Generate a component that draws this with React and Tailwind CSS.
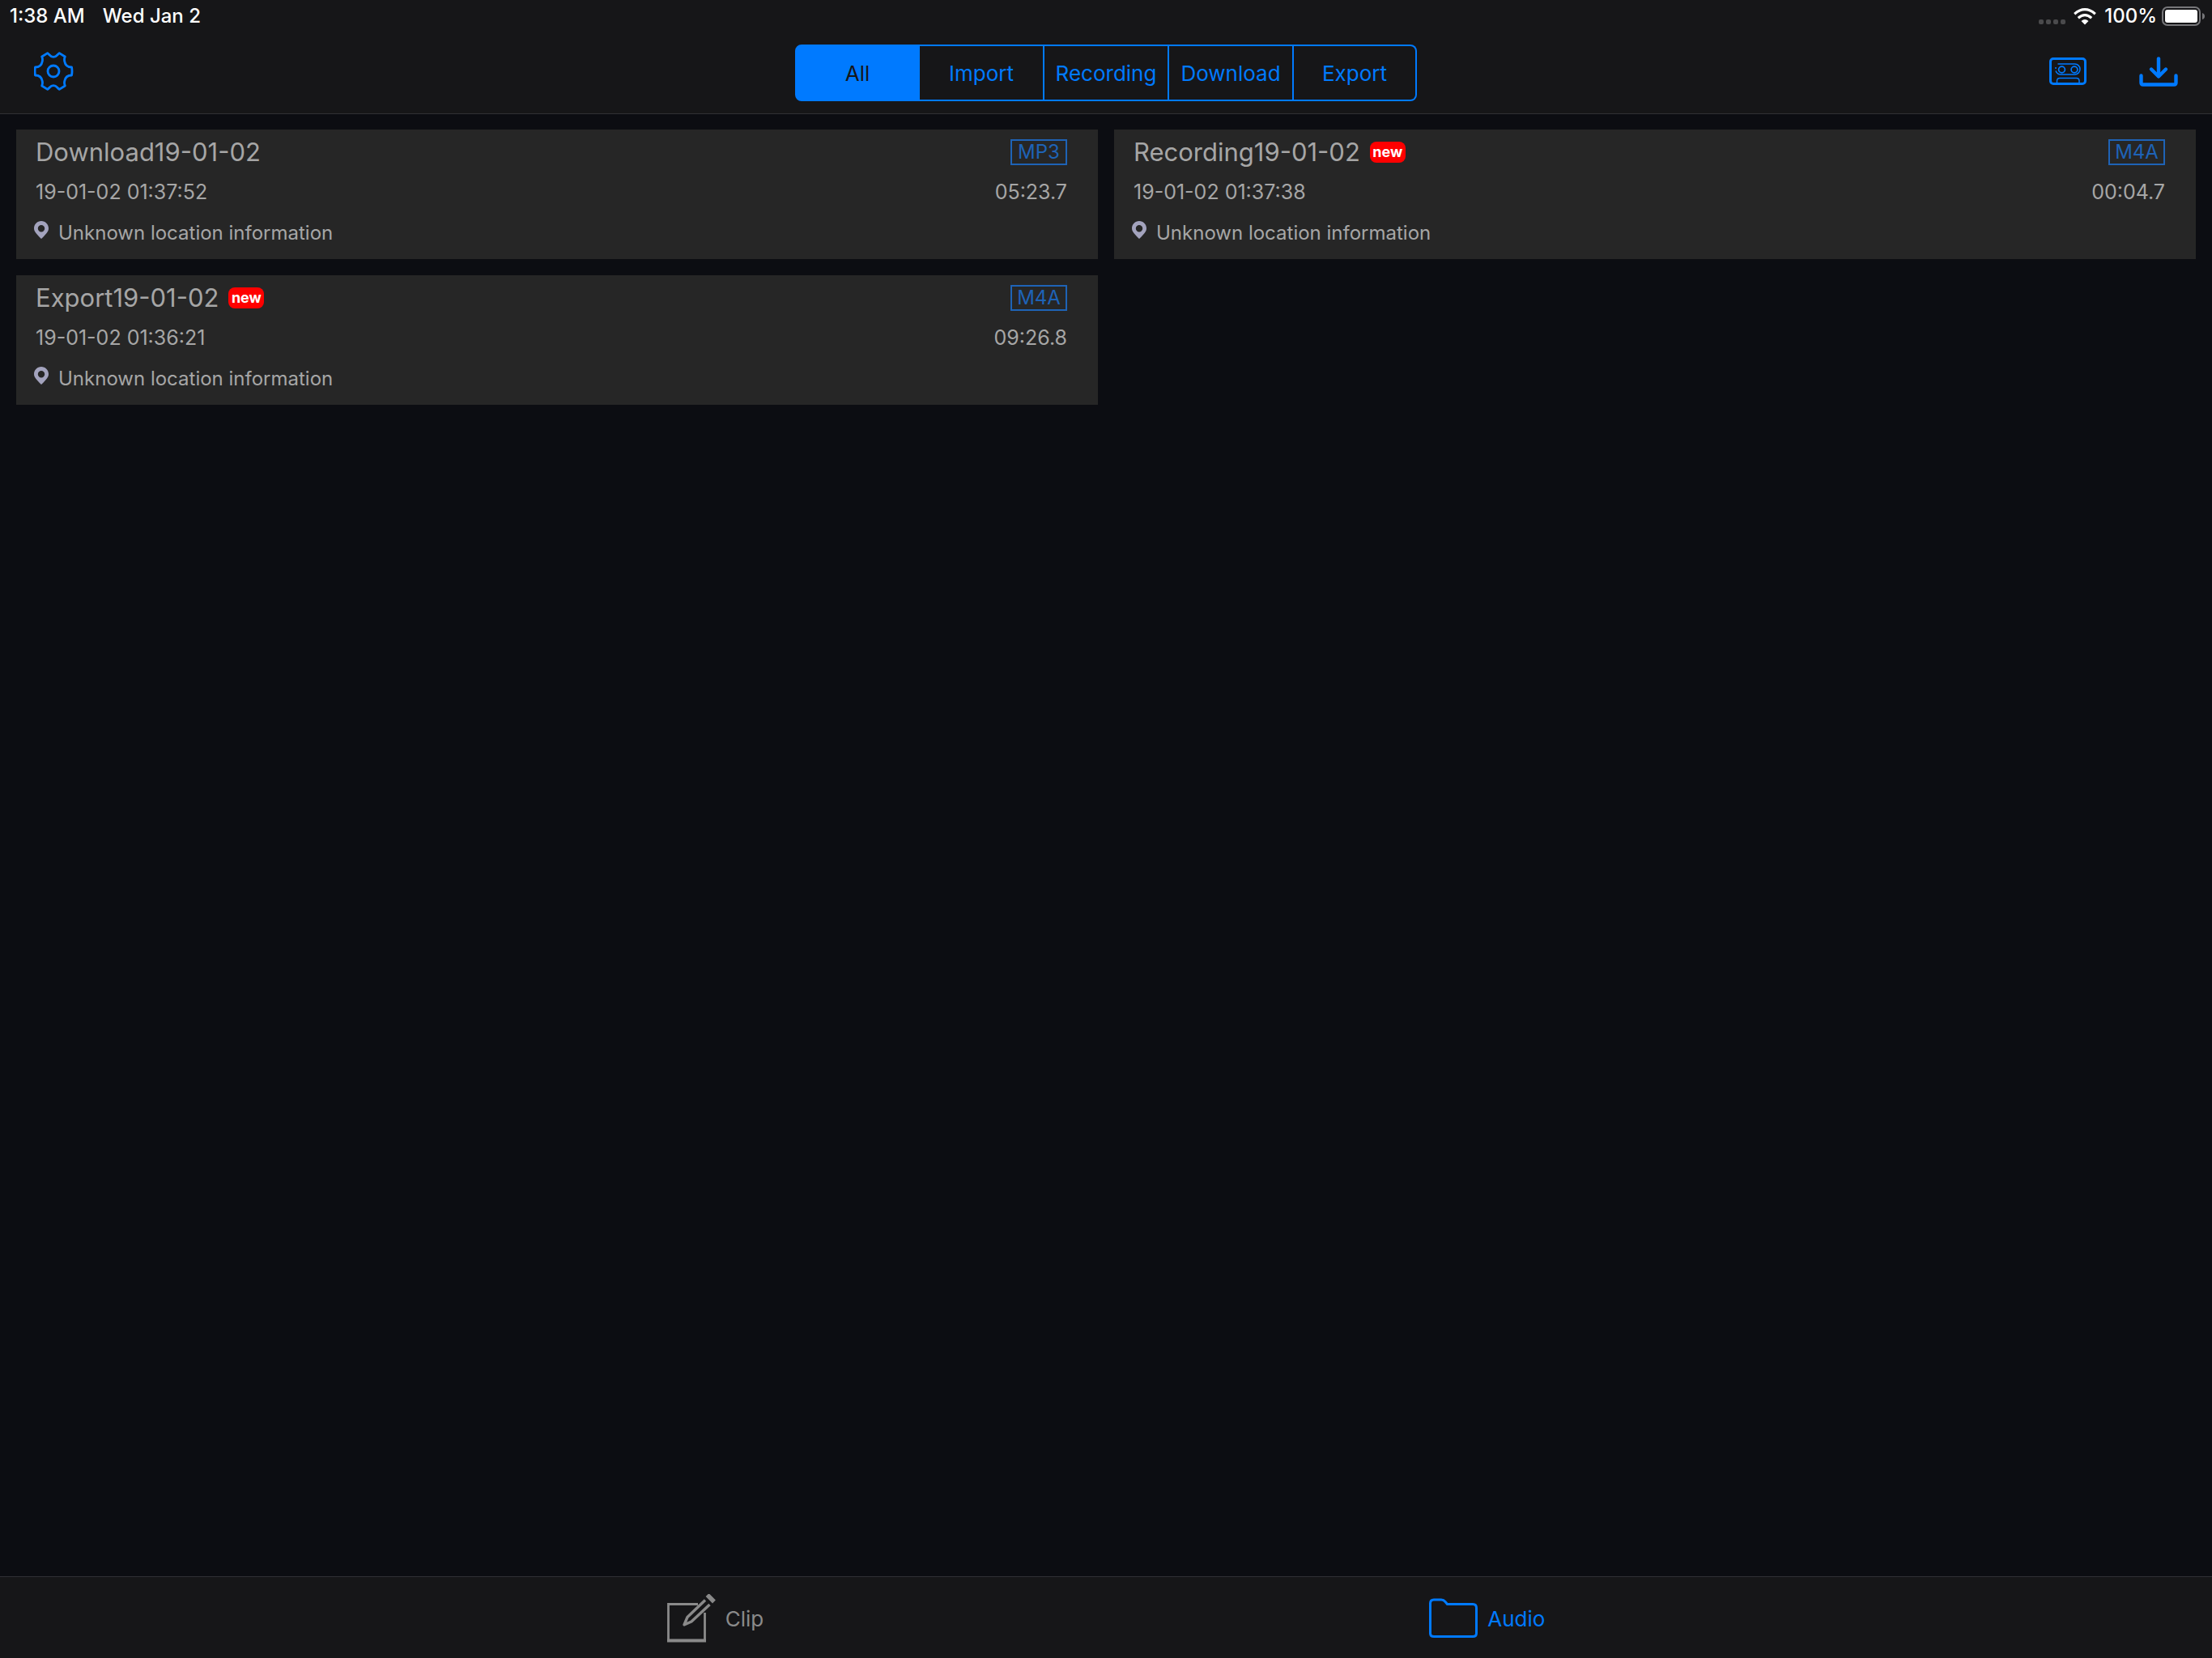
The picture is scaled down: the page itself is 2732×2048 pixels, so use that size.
import React, { useState } from "react";

const filters = ["All", "Import", "Recording", "Download", "Export"];

const files = [
  { name: "Download19-01-02", date: "19-01-02 01:37:52", type: "MP3", length: "05:23.7", isNew: false },
  { name: "Recording19-01-02", date: "19-01-02 01:37:38", type: "M4A", length: "00:04.7", isNew: true },
  { name: "Export19-01-02", date: "19-01-02 01:36:21", type: "M4A", length: "09:26.8", isNew: true },
];

const GearIcon = () => (
  <svg width="50" height="48" viewBox="2 0 50 48" fill="none" stroke="currentColor" strokeWidth="2.8" strokeLinejoin="round">
    <path d="M18.7 1.600 C21.500 3.500 22 6.400 26 6.400 S30.500 3.500 33.300 1.600 L40.300 6 C39 9 39.300 10 39.800 12 C40.500 16 43 19 48.500 19 Q49.500 24 48.500 29 C43 29 40.500 32 39.800 36 C39.300 38 39 39 40.300 42 L33.300 46.400 C30.500 44.500 30 41.600 26 41.600 S21.500 44.500 18.700 46.400 L11.700 42 C13 39 12.700 38 12.200 36 C11.500 32 9 29 3.500 29 Q2.500 24 3.500 19 C9 19 11.500 16 12.200 12 C12.700 10 13 9 11.700 6 Z" />
    <circle cx="26" cy="24" r="7" />
  </svg>
);

const CassetteIcon = () => (
  <svg width="46" height="34" viewBox="0 0 46 34" fill="none" stroke="currentColor">
    <rect x="1.5" y="1.5" width="43" height="31" rx="3.5" strokeWidth="3" />
    <path d="M10.5 8 H31.500 a6.500 6.500 0 0 1 0 13 H14 a6.500 6.500 0 0 1 -6 -4.500 M8 14 v-2" strokeWidth="1.5" />
    <circle cx="15.500" cy="15" r="3.900" strokeWidth="1.7" />
    <circle cx="31" cy="15" r="3.900" strokeWidth="1.7" />
    <path d="M9.500 32 V29 q0 -3.500 3.500 -3.500 H33.500 q3.500 0 3.500 3.500 V32" strokeWidth="1.5" />
  </svg>
);

const SaveIcon = () => (
  <svg width="48" height="37" viewBox="0 0 48 37" fill="none" stroke="currentColor" strokeWidth="4.4" strokeLinecap="round">
    <path d="M24 2.500 V24" />
    <path d="M15 15.500 L24 24.500 L33 15.500" strokeLinejoin="round" />
    <path d="M2.500 23.500 V32 Q2.500 34.500 5 34.500 H43 Q45.500 34.500 45.500 32 V23.500" />
  </svg>
);

const PinIcon = () => (
  <svg width="18" height="22" viewBox="0 0 18 22" className="mb-2 text-[#a3a3bd]">
    <path
      fill="currentColor"
      fillRule="evenodd"
      d="M9 0 C14 0 18 4 18 9 C18 13 15 16 9 22 C3 16 0 13 0 9 C0 4 4 0 9 0 Z M9 5 a4.200 4.200 0 1 0 0 8.400 a4.200 4.200 0 1 0 0 -8.400 Z"
    />
  </svg>
);

const ClipIcon = () => (
  <svg width="60" height="60" viewBox="0 0 60 60" fill="none" stroke="currentColor">
    <path d="M38 12.500 H1.500 M1.500 11 V59 M46.500 23 V58" strokeWidth="2.8" />
    <path d="M0 57.500 H48" strokeWidth="4" />
    <path d="M47 7.500 L25 28.500 L21 38 L30 34 L52.500 13" strokeWidth="3.4" strokeLinejoin="round" />
    <path d="M51.500 3 L56 7.500" strokeWidth="5.5" strokeLinecap="square" />
  </svg>
);

const FolderIcon = () => (
  <svg width="60" height="50" viewBox="0 0 60 50" fill="none" stroke="currentColor" strokeWidth="3" strokeLinejoin="round">
    <path d="M6 2 H15 Q18 2 20 4.500 L22.500 7.500 H54 Q58.500 7.500 58.500 12 V43.500 Q58.500 47.500 54 47.500 H6 Q1.500 47.500 1.500 43.500 V6.500 Q1.500 2 6 2 Z" />
  </svg>
);

const WifiIcon = () => (
  <svg width="28" height="21" viewBox="0 0 28 21" fill="none" stroke="currentColor" strokeWidth="3.2">
    <path d="M1.200 7.200 Q14 -3.800 26.800 7.200" />
    <path d="M5.800 12.200 Q14 5 22.200 12.200" />
    <path d="M14 20.500 L9.500 16 Q14 12 18.500 16 Z" fill="currentColor" stroke="none" />
  </svg>
);

const BatteryIcon = () => (
  <svg width="54" height="24" viewBox="0 0 54 24">
    <rect x="1" y="1" width="46" height="22" rx="6" fill="none" stroke="#77777a" strokeWidth="2" />
    <rect x="4" y="4" width="40" height="16" rx="3" fill="#fff" />
    <path d="M50 8 Q53 9 53 12 T50 16 Z" fill="#77777a" />
  </svg>
);

const StatusBar = () => (
  <div className="flex h-10 items-center justify-between pr-2 pl-3 text-2xl font-medium text-white">
    <div className="flex gap-[22px]">
      <span>1:38 AM</span>
      <span>Wed Jan 2</span>
    </div>
    <div className="flex items-center">
      <div className="mt-3.5 mr-2.5 flex gap-[3px]">
        {[0, 1, 2, 3].map((dot) => (
          <span key={dot} className="size-1.5 rounded-xs bg-[#4a4a4c]" />
        ))}
      </div>
      <WifiIcon />
      <span className="mr-1.5 ml-2.5">100%</span>
      <BatteryIcon />
    </div>
  </div>
);

const FileCard = ({ file }) => (
  <li className="bg-[#262626] pt-[3px] pr-[38px] pb-[7px] pl-6 text-2xl text-[#a6a6a6]">
    <div className="flex h-[50px] items-center justify-between">
      <div className="flex items-center gap-3">
        <h2 className="text-[31px]">{file.name}</h2>
        {file.isNew && (
          <span className="flex h-[26px] w-11 items-center justify-center rounded-lg bg-[#ff0000] text-lg font-bold text-white">
            new
          </span>
        )}
      </div>
      <span className="flex h-8 w-[70px] items-center justify-center border-2 border-[#1e63b6] text-[#1e63b6]">
        {file.type}
      </span>
    </div>
    <div className="flex h-[50px] items-center justify-between text-[25px]">
      <span>{file.date}</span>
      <span>{file.length}</span>
    </div>
    <div className="-ml-0.5 flex h-[50px] items-center gap-3">
      <PinIcon />
      <span>Unknown location information</span>
    </div>
  </li>
);

const App = () => {
  const [filter, setFilter] = useState("All");
  const shown = files.filter((file) => filter === "All" || file.name.startsWith(filter));

  return (
    <div className="flex min-h-screen flex-col bg-[#0c0d12] font-['Inter','Liberation_Sans',sans-serif]">
      <header className="border-b border-[#303034] bg-[#161618]">
        <StatusBar />
        <div className="grid h-[100px] grid-cols-[1fr_auto_1fr] items-center px-[42px] pb-1 text-[#007aff]">
          <button aria-label="Settings" className="justify-self-start">
            <GearIcon />
          </button>
          <nav className="mt-1 flex">
            {filters.map((name) => (
              <button
                key={name}
                onClick={() => setFilter(name)}
                className={`h-[70px] w-[154px] border-y-2 border-r-2 border-[#007aff] text-[26px] first:rounded-l-lg first:border-l-2 last:w-[152px] last:rounded-r-lg ${
                  filter === name ? "bg-[#007aff] text-[#161618]" : ""
                }`}
              >
                {name}
              </button>
            ))}
          </nav>
          <div className="flex items-center gap-[65px] justify-self-end">
            <button aria-label="Record">
              <CassetteIcon />
            </button>
            <button aria-label="Import file">
              <SaveIcon />
            </button>
          </div>
        </div>
      </header>

      <main className="flex-1 p-5 pt-[19px]">
        <ul className="grid grid-cols-2 gap-5">
          {shown.map((file) => (
            <FileCard key={file.name} file={file} />
          ))}
        </ul>
      </main>

      <footer className="border-t border-[#303034] bg-[#161618]">
        <nav className="flex h-[100px] items-center justify-center gap-[822px] pt-0.5 text-[26px]">
          <a href="#clip" className="flex items-center gap-3 text-[#8a8a8a]">
            <ClipIcon />
            Clip
          </a>
          <a href="#audio" className="flex items-center gap-3 text-[#007aff]">
            <FolderIcon />
            Audio
          </a>
        </nav>
      </footer>
    </div>
  );
};

export default App;
